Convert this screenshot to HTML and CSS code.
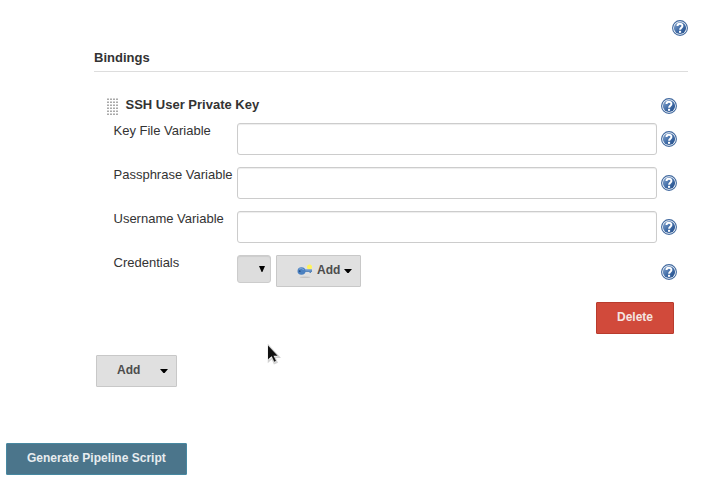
FILE: index.html
```html
<!DOCTYPE html>
<html lang="en">
<head>
<meta charset="utf-8">
<title>Pipeline Syntax</title>
<link rel="stylesheet" href="styles.css">
</head>
<body>
<svg class="defs" width="0" height="0">
  <defs>
    <linearGradient id="blue" x1="0" y1="0" x2="1" y2="1">
      <stop offset="0" stop-color="#8eacd2"/>
      <stop offset=".5" stop-color="#446fa9"/>
      <stop offset="1" stop-color="#1f4a87"/>
    </linearGradient>
    <symbol id="help" viewBox="0 0 16 16">
      <circle cx="8" cy="8" r="7.4" fill="#fff" stroke="#41699f" stroke-width="1.1"/>
      <circle cx="8" cy="8" r="6.1" fill="url(#blue)"/>
      <path d="M5.5 6.1C5.5 2.9 10.4 3 10.4 5.9C10.4 7.8 8.2 7.8 8.1 9.8" fill="none" stroke="#fff" stroke-width="2"/>
      <rect x="7" y="10.8" width="2.1" height="2" fill="#fff"/>
    </symbol>
  </defs>
</svg>
<main class="page">
  <div class="top"><svg class="help"><use href="#help"/></svg></div>
  <section class="section">
    <h2 class="heading">Bindings</h2>
    <div class="binding">
      <header class="title">
        <span class="grip"></span>
        <h3 class="name">SSH User Private Key</h3>
        <svg class="help"><use href="#help"/></svg>
      </header>
      <div class="row"><label class="label" for="key">Key File Variable</label><input class="field" id="key" type="text"><svg class="help"><use href="#help"/></svg></div>
      <div class="row"><label class="label" for="pass">Passphrase Variable</label><input class="field" id="pass" type="text"><svg class="help"><use href="#help"/></svg></div>
      <div class="row"><label class="label" for="user">Username Variable</label><input class="field" id="user" type="text"><svg class="help"><use href="#help"/></svg></div>
      <div class="row credentials">
        <span class="label">Credentials</span>
        <div class="controls">
          <button class="select" aria-label="Credentials"><svg class="arrow" viewBox="0 0 6 6"><path d="M0 0H6L3.4 6H2.6Z"/></svg></button>
          <button class="button add-key">
            <svg class="key" viewBox="0 0 16 16">
              <ellipse cx="8" cy="14.2" rx="5.5" ry=".7" fill="#c4c4c4"/>
              <circle cx="12.5" cy="4" r="2.5" fill="#fff45c"/>
              <path d="M7 6.5H15V9H14V10H12.5V9H7Z" fill="#5a88be"/>
              <path d="M7 7.2H14.5" stroke="#719bce" fill="none"/>
              <ellipse cx="4.5" cy="8" rx="4" ry="3.8" fill="#4a80c0"/>
              <path d="M1.8 6.2Q4.5 4.4 6.8 6.7" stroke="#80a9d9" fill="none"/>
              <circle cx="2.7" cy="8.2" r=".9" fill="#254f84"/>
            </svg>
            <span>Add</span>
            <svg class="caret" viewBox="0 0 8 4"><path d="M0 0H8L4.6 4H3.4Z"/></svg>
          </button>
        </div>
        <svg class="help"><use href="#help"/></svg>
      </div>
      <div class="actions"><button class="button danger">Delete</button></div>
    </div>
    <button class="button add"><span>Add</span><svg class="caret" viewBox="0 0 8 4"><path d="M0 0H8L4.6 4H3.4Z"/></svg></button>
  </section>
  <button class="button primary">Generate Pipeline Script</button>
</main>
<svg class="cursor" viewBox="0 0 14 21"><path d="M1.5 1.5V17.5L5 14.2L7.3 19.5L10 18.3L7.7 13.2H12.3Z" fill="#fff" stroke="#d2d2d2" stroke-width="1.5"/><path d="M1 1.5V15.2L4.7 12.2L7.3 17.8L9 17L6.5 11.7H10.6Z" fill="#111"/></svg>
</body>
</html>
```
FILE: styles.css
```css
* {
  box-sizing: border-box;
}

body {
  margin: 0;
  background: #fff;
  color: #333;
  font: 13px/16px "Liberation Sans", Arial, sans-serif;
}

svg {
  flex: none;
}

.defs {
  position: absolute;
}

.page {
  display: flex;
  flex-direction: column;
  align-items: flex-start;
  height: 486px;
  padding: 20px 14px 0 6px;
}

.top {
  align-self: flex-end;
  height: 30px;
}

.help {
  display: block;
  width: 16px;
  height: 16px;
}

.section {
  align-self: stretch;
  margin-left: 88px;
}

.heading {
  height: 22px;
  margin: 0;
  border-bottom: 1px solid #ddd;
  font-size: 13px;
  line-height: 16px;
}

.binding {
  padding: 26px 11px 0 13px;
}

.title {
  display: flex;
  height: 25px;
}

.grip {
  width: 11px;
  height: 17px;
  background:
    linear-gradient(90deg, transparent 2px, #fff 2px) 0 0 / 3px 3px,
    linear-gradient(#d2d2d2 1px, #aaa 1px 2px, #fff 2px) 0 0 / 3px 3px;
}

.name {
  flex: 1;
  margin: -1px 0 0 7.5px;
  font-size: 13px;
  line-height: 16px;
}

.row {
  display: flex;
  align-items: flex-start;
  height: 44px;
  padding-left: 6.5px;
}

.row .help {
  margin: 8px 0 0 4px;
}

.credentials .help {
  margin-top: 9px;
}

.label {
  flex: none;
  width: 123.5px;
  white-space: nowrap;
}

.field {
  flex: 1;
  min-width: 0;
  height: 32px;
  border: 1px solid #ccc;
  border-radius: 3px;
  background: #fff;
  box-shadow: inset 0 1px 1px rgba(0, 0, 0, .075);
}

.controls {
  display: flex;
  flex: 1;
  gap: 5px;
}

.select {
  display: flex;
  align-items: flex-start;
  width: 34px;
  height: 28px;
  padding: 10px 0 0 21px;
  border: 1px solid #ccc;
  border-radius: 3px;
  background: #ddd;
  box-shadow: inset 0 1px 1px rgba(0, 0, 0, .075);
}

.arrow {
  width: 6px;
  height: 6px;
}

.button {
  display: flex;
  height: 32px;
  padding: 7px 0 0 20px;
  border: 1px solid #c8c8c8;
  border-radius: 1px;
  background: #e0e0e0;
  color: #4d4d4d;
  font: bold 12px/15px "Liberation Sans", Arial, sans-serif;
  white-space: nowrap;
}

.caret {
  width: 8px;
  height: 4px;
  margin-top: 6px;
}

.add-key .caret {
  margin-left: 3.5px;
}

.add-key {
  width: 85px;
}

.key {
  width: 16px;
  height: 16px;
  margin-right: 4px;
}

.actions {
  display: flex;
  justify-content: flex-end;
  padding: 3px 3px 0 0;
}

.danger {
  width: 78px;
  border-color: #b93b2d;
  background: #d14a3b;
  color: #f5e5e2;
}

.add {
  width: 81px;
  margin: 21px 0 0 2px;
}

.add .caret {
  margin-left: 19.5px;
}

.primary {
  width: 181px;
  margin-top: 56px;
  border-color: #4788a1;
  background: #4b758b;
  color: #e7ecef;
}

.cursor {
  position: absolute;
  left: 267px;
  top: 344px;
  width: 14px;
  height: 21px;
}
```
